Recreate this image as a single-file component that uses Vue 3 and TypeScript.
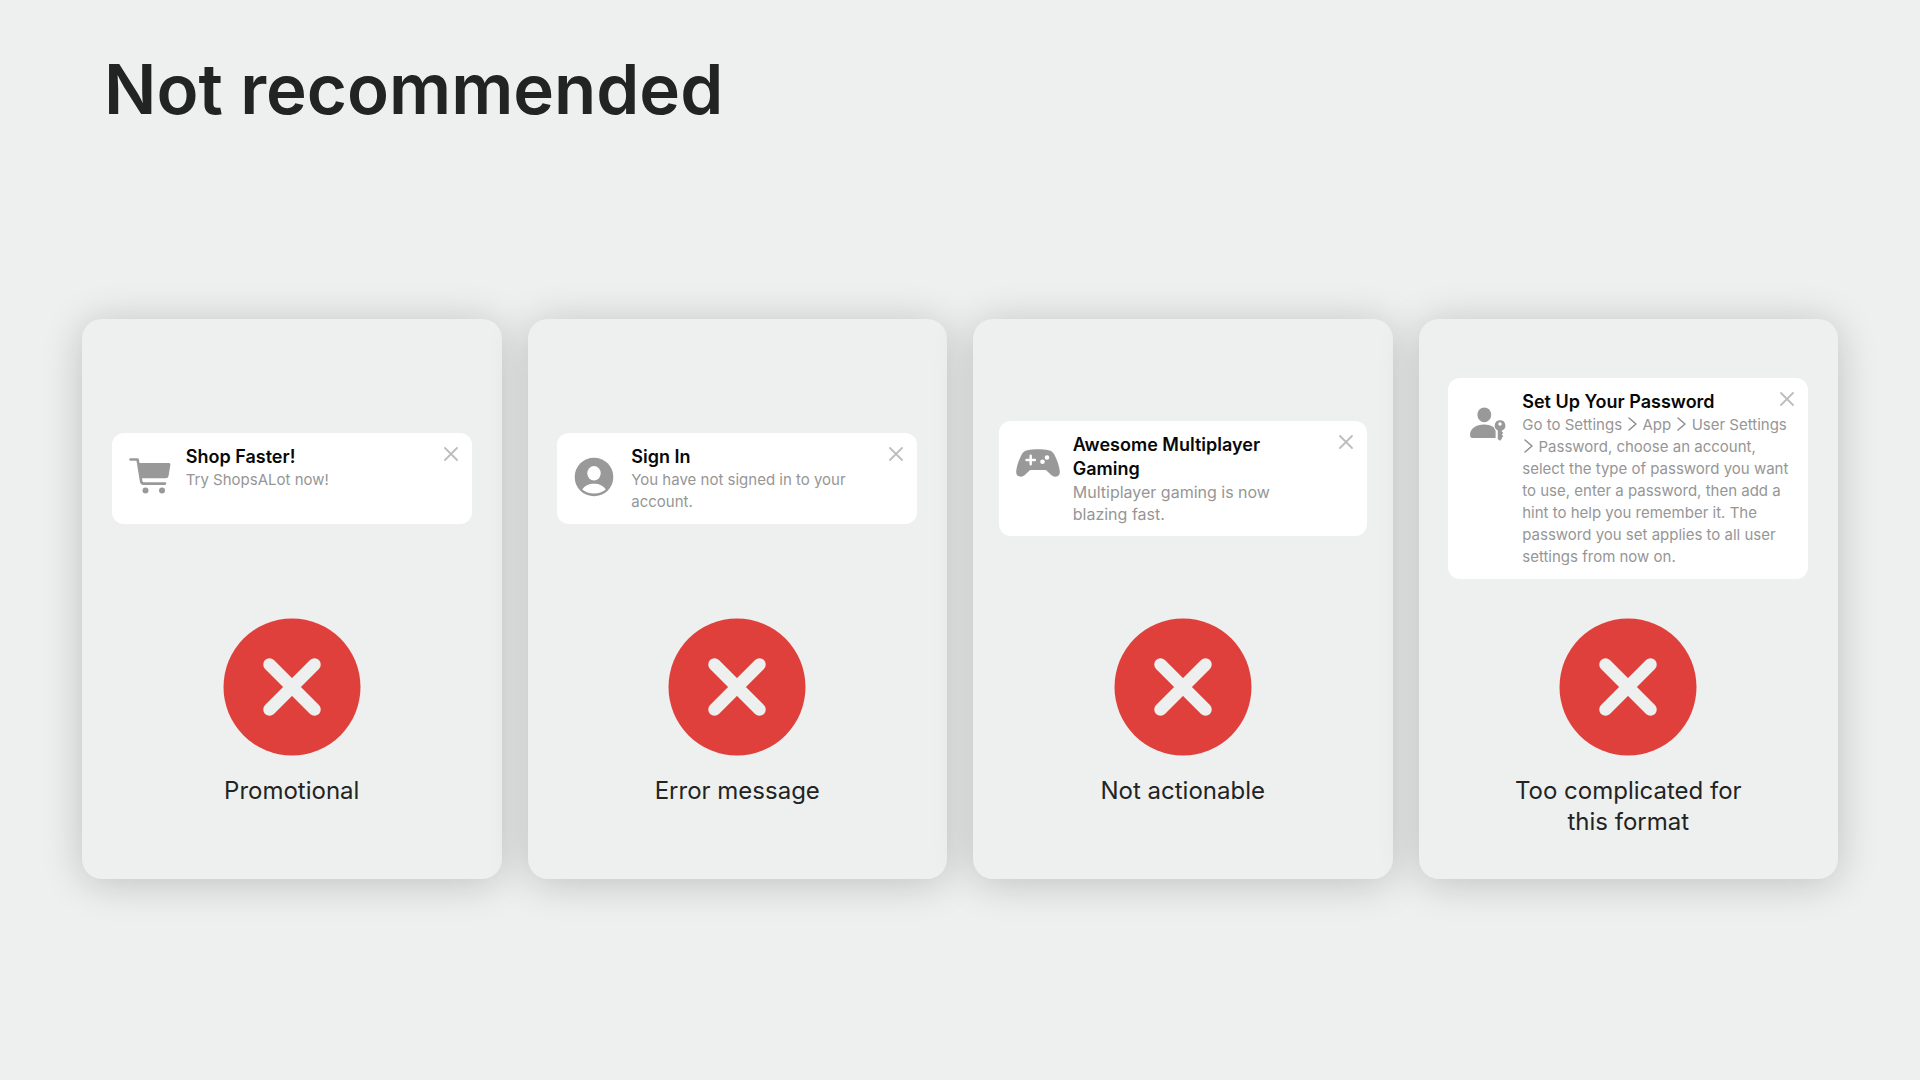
<script setup lang="ts">
type IconName = 'cart' | 'person' | 'gamepad' | 'passkey'

interface Example {
  icon: IconName
  title: string
  message: string[]
  caption: string
  large?: boolean
}

// Message parts are joined by a chevron.
const examples: Example[] = [
  { icon: 'cart', title: 'Shop Faster!', message: ['Try ShopsALot now!'], caption: 'Promotional' },
  {
    icon: 'person',
    title: 'Sign In',
    message: ['You have not signed in to your account.'],
    caption: 'Error message',
  },
  {
    icon: 'gamepad',
    title: 'Awesome Multiplayer Gaming',
    message: ['Multiplayer gaming is now blazing fast.'],
    caption: 'Not actionable',
    large: true,
  },
  {
    icon: 'passkey',
    title: 'Set Up Your Password',
    message: [
      'Go to Settings ',
      ' App ',
      ' User Settings ',
      ' Password, choose an account, select the type of password you want to use, enter a password, then add a hint to help you remember it. The password you set applies to all user settings from now on.',
    ],
    caption: 'Too complicated for this format',
  },
]
</script>

<template>
  <main class="slide">
    <h1 class="heading">Not recommended</h1>
    <section class="cards">
      <article v-for="item in examples" :key="item.title" class="card">
        <div class="stage">
          <div class="tip" :class="[item.icon, { large: item.large }]">
            <div class="symbol">
              <svg v-if="item.icon === 'cart'" width="42" height="38" viewBox="0 0 42 38" fill="none" aria-hidden="true">
                <path d="M1.5 2.5H8.6L12.2 24.6Q12.7 26.6 14.6 26.6H36" stroke="#999" stroke-width="2.6" stroke-linecap="round" stroke-linejoin="round" />
                <path d="M9 6H40Q41.600 6 41.400 7.600L39.600 18.800Q39.200 21.300 36.800 21.300H11.500Z" fill="#999" />
                <circle cx="16.500" cy="33.500" r="3" fill="#999" />
                <circle cx="33" cy="33.500" r="3" fill="#999" />
              </svg>
              <svg v-else-if="item.icon === 'person'" width="40" height="40" viewBox="0 0 40 40" aria-hidden="true">
                <circle cx="20" cy="20" r="19.300" fill="#999" />
                <ellipse cx="20" cy="16.300" rx="6.700" ry="7.300" fill="#fff" />
                <path d="M8.300 32.600C10.500 28.600 15 26.800 20 26.800S29.500 28.600 31.700 32.600C28.600 35.300 24.600 36.600 20 36.600S11.400 35.300 8.300 32.600Z" fill="#fff" />
              </svg>
              <svg v-else-if="item.icon === 'gamepad'" width="44" height="28" viewBox="0 0 44 28" aria-hidden="true">
                <path d="M11.500 1.200C17 0 27 0 32.500 1.200C35.500 1.800 37 3 38.300 5.500C41.300 11.500 43.600 18 43.800 22.500C44 26 42 27.700 39.300 27.700C37.400 27.700 36.200 27 34.700 25.600L31.200 22.200C30.300 21.400 29.600 21.100 28.500 21.100H15.500C14.400 21.100 13.700 21.400 12.800 22.200L9.300 25.600C7.800 27 6.600 27.700 4.700 27.700C2 27.700 0 26 .2 22.500C.4 18 2.700 11.500 5.700 5.500C7 3 8.500 1.800 11.500 1.200Z" fill="#999" />
                <path d="M14.700 6.800V15.200M10.500 11H18.900" stroke="#fff" stroke-width="2.400" stroke-linecap="round" />
                <circle cx="31" cy="8.500" r="2.300" fill="#fff" />
                <circle cx="26.500" cy="12.800" r="2.300" fill="#fff" />
              </svg>
              <svg v-else width="36" height="34" viewBox="0 0 36 34" aria-hidden="true">
                <ellipse cx="14.300" cy="7.800" rx="6.900" ry="7.400" fill="#999" />
                <path d="M0 28C0 21.500 6.500 17.500 14 17.500C18 17.500 21.700 18.600 24 20.600Q24.600 22.500 25.600 23.800V31H2.500Q0 31 0 28Z" fill="#999" />
                <path d="M30 13.300A5.300 5.300 0 0 1 31.800 23.600V24.600L33.300 26L31.800 27.600L33.300 29.200L31.800 30.800V32L29.900 33.700L27.800 32V23.400A5.300 5.300 0 0 1 30 13.300Z" fill="#999" />
                <circle cx="30" cy="17" r="1.700" fill="#fff" />
              </svg>
            </div>
            <div class="text">
              <h2 class="title">{{ item.title }}</h2>
              <p class="message">
                <template v-for="(part, index) in item.message" :key="index"><svg v-if="index > 0" class="chevron" width="12" height="16" viewBox="0 0 12 16" aria-hidden="true"><path d="M3 2L10 8L3 14" fill="none" stroke="#8e8e8e" stroke-width="1.500" stroke-linecap="round" stroke-linejoin="round" /></svg>{{ part }}</template>
              </p>
            </div>
            <button class="close" type="button" aria-label="Close">
              <svg width="14" height="14" viewBox="0 0 14 14" aria-hidden="true">
                <path d="M1 1L13 13M13 1L1 13" stroke="#bdbdbd" stroke-width="1.800" stroke-linecap="round" />
              </svg>
            </button>
          </div>
        </div>
        <svg class="mark" width="138" height="138" viewBox="0 0 138 138" aria-hidden="true">
          <circle cx="69" cy="69" r="68.500" fill="#df403c" />
          <path d="M46.500 46.500L91.500 91.500M91.500 46.500L46.500 91.500" stroke="#eef0ef" stroke-width="12.500" stroke-linecap="round" />
        </svg>
        <p class="caption">{{ item.caption }}</p>
      </article>
    </section>
  </main>
</template>

<style>
body {
  margin: 0;
  background: #eef0ef;
}
</style>

<style scoped>
.slide {
  box-sizing: border-box;
  min-height: 100vh;
  padding: 43px 82px;
  font-family: Inter, "Liberation Sans", sans-serif;
  color: #222423;
}

.heading {
  margin: 0 0 184px;
  padding-left: 22px;
  font-size: 69px;
  line-height: 92px;
  font-weight: 600;
}

.cards {
  display: grid;
  grid-template-columns: repeat(4, 1fr);
  gap: 26px;
}

.card {
  display: flex;
  flex-direction: column;
  align-items: center;
  padding: 20px 20px 42px;
  border-radius: 20px;
  background: #eef0ef;
  box-shadow: 0 4px 40px rgba(0, 0, 0, 0.2);
}

.stage {
  display: flex;
  align-items: center;
  align-self: stretch;
  justify-content: center;
  min-height: 279px;
}

.tip {
  box-sizing: border-box;
  position: relative;
  display: flex;
  width: 360px;
  padding: 12px 14px 11px 17px;
  border-radius: 12px;
  background: #fff;
}

.tip.large {
  width: 368px;
}

.symbol {
  box-sizing: border-box;
  display: flex;
  flex: none;
  width: 57px;
  padding-top: 12px;
}

.gamepad .symbol {
  padding-top: 16px;
}

.passkey .symbol {
  padding: 17px 0 0 5px;
}

.text {
  flex: 1;
  min-width: 0;
}

.title {
  margin: 0;
  padding-right: 40px;
  font-size: 18px;
  line-height: 24px;
  font-weight: 600;
  color: #080808;
}

.message {
  margin: 0;
  min-height: 44px;
  font-size: 15px;
  line-height: 22px;
  color: #969696;
}

.cart .message,
.person .message,
.gamepad .message {
  padding-right: 40px;
}

.large .message {
  font-size: 16px;
}

.chevron {
  vertical-align: -2px;
}

.close {
  position: absolute;
  top: 9px;
  right: 9px;
  display: flex;
  align-items: center;
  justify-content: center;
  width: 24px;
  height: 24px;
  padding: 0;
  border: 0;
  background: none;
  cursor: pointer;
}

.mark {
  flex: none;
}

.caption {
  max-width: 250px;
  margin: 19px 0 0;
  font-size: 24px;
  line-height: 31px;
  text-align: center;
}
</style>
